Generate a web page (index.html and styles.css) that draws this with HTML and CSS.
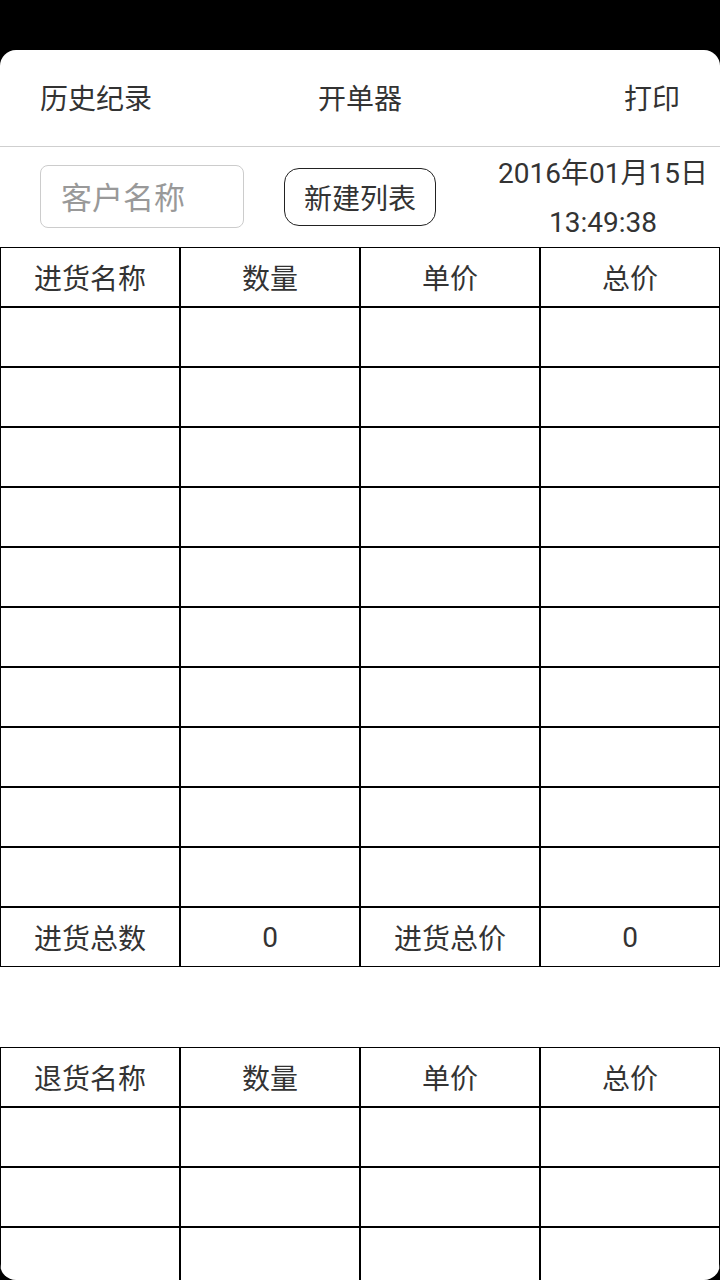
FILE: index.html
```html
<!DOCTYPE html>
<html lang="zh-CN">
<head>
<meta charset="utf-8">
<title>开单器</title>
<link rel="stylesheet" href="styles.css">
</head>
<body>
<div class="card">
  <div class="topbar">
    <span class="nav-item nav-left">历史纪录</span>
    <span class="nav-item nav-center">开单器</span>
    <span class="nav-item nav-right">打印</span>
  </div>
  <div class="toolbar">
    <input class="customer" type="text" placeholder="客户名称">
    <button class="new-list" type="button">新建列表</button>
    <div class="datetime">
      <div>2016年01月15日</div>
      <div>13:49:38</div>
    </div>
  </div>
  <div class="table">
    <div class="row"><div class="cell">进货名称</div><div class="cell">数量</div><div class="cell">单价</div><div class="cell">总价</div></div>
    <div class="row"><div class="cell"></div><div class="cell"></div><div class="cell"></div><div class="cell"></div></div>
    <div class="row"><div class="cell"></div><div class="cell"></div><div class="cell"></div><div class="cell"></div></div>
    <div class="row"><div class="cell"></div><div class="cell"></div><div class="cell"></div><div class="cell"></div></div>
    <div class="row"><div class="cell"></div><div class="cell"></div><div class="cell"></div><div class="cell"></div></div>
    <div class="row"><div class="cell"></div><div class="cell"></div><div class="cell"></div><div class="cell"></div></div>
    <div class="row"><div class="cell"></div><div class="cell"></div><div class="cell"></div><div class="cell"></div></div>
    <div class="row"><div class="cell"></div><div class="cell"></div><div class="cell"></div><div class="cell"></div></div>
    <div class="row"><div class="cell"></div><div class="cell"></div><div class="cell"></div><div class="cell"></div></div>
    <div class="row"><div class="cell"></div><div class="cell"></div><div class="cell"></div><div class="cell"></div></div>
    <div class="row"><div class="cell"></div><div class="cell"></div><div class="cell"></div><div class="cell"></div></div>
    <div class="row"><div class="cell">进货总数</div><div class="cell">0</div><div class="cell">进货总价</div><div class="cell">0</div></div>
  </div>
  <div class="table second">
    <div class="row"><div class="cell">退货名称</div><div class="cell">数量</div><div class="cell">单价</div><div class="cell">总价</div></div>
    <div class="row"><div class="cell"></div><div class="cell"></div><div class="cell"></div><div class="cell"></div></div>
    <div class="row"><div class="cell"></div><div class="cell"></div><div class="cell"></div><div class="cell"></div></div>
    <div class="row"><div class="cell"></div><div class="cell"></div><div class="cell"></div><div class="cell"></div></div>
  </div>
</div>
</body>
</html>
```
FILE: styles.css
```css
html, body {
  margin: 0;
  padding: 0;
  background: #000;
  height: 1280px;
  overflow: hidden;
}
body {
  font-family: Roboto, "Noto Sans CJK SC", sans-serif;
  color: #333;
}
.card {
  margin-top: 50px;
  height: 1230px;
  background: #fff;
  border-radius: 16px;
  overflow: hidden;
}
.topbar {
  height: 97px;
  box-sizing: border-box;
  border-bottom: 1px solid #cfcfcf;
  display: grid;
  grid-template-columns: 1fr auto 1fr;
  align-items: center;
  padding: 4px 40px 0;
  font-size: 28px;
}
.nav-item {
  line-height: 1;
}
.nav-left {
  justify-self: start;
}
.nav-center {
  justify-self: center;
}
.nav-right {
  justify-self: end;
}
.toolbar {
  height: 100px;
  box-sizing: border-box;
  display: flex;
  align-items: flex-start;
  padding-left: 40px;
}
.customer {
  margin-top: 18px;
  width: 204px;
  height: 63px;
  box-sizing: border-box;
  border: 1px solid #cccccc;
  border-radius: 8px;
  padding: 3px 0 0 20px;
  font-family: Roboto, "Noto Sans CJK SC", sans-serif;
  font-size: 31px;
  color: #333;
  outline: none;
  background: #fff;
}
.customer::placeholder {
  color: #999;
}
.new-list {
  margin-top: 21px;
  margin-left: 40px;
  width: 152px;
  height: 58px;
  box-sizing: border-box;
  border: 1px solid #222;
  border-radius: 15px;
  background: #fff;
  font-family: Roboto, "Noto Sans CJK SC", sans-serif;
  font-size: 28px;
  color: #333;
  padding: 0;
}
.datetime {
  margin-left: auto;
  margin-right: 12px;
  margin-top: 2px;
  font-size: 28px;
  line-height: 49px;
  text-align: center;
}
.table {
  display: flex;
  flex-direction: column;
}
.table.second {
  margin-top: 80px;
}
.row {
  display: flex;
}
.cell {
  width: 180px;
  height: 60px;
  box-sizing: border-box;
  border: 1px solid #000;
  display: flex;
  align-items: center;
  justify-content: center;
  padding-top: 0;
  font-size: 28px;
  color: #333;
}
```
